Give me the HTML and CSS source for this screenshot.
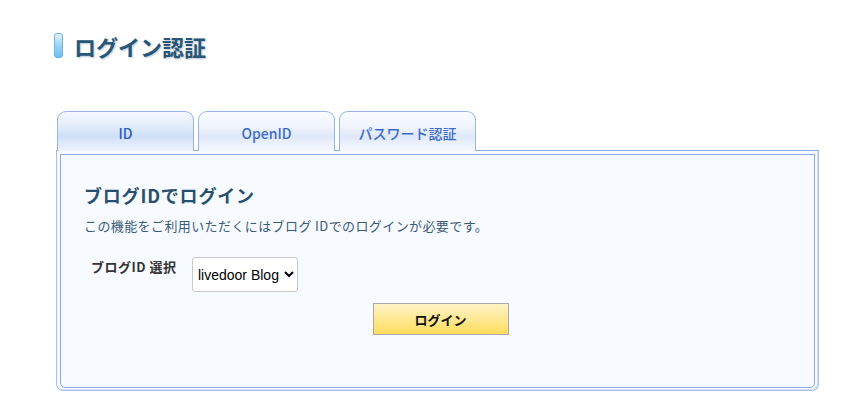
FILE: index.html
```html
<!DOCTYPE html>
<html lang="ja">
<head>
<meta charset="utf-8">
<title>ログイン認証</title>
<link rel="stylesheet" href="styles.css">
</head>
<body>
<div class="page">
  <h1 class="title"><span class="title-mark"></span>ログイン認証</h1>
  <div class="tabs">
    <div class="tab active">ID</div>
    <div class="tab">OpenID</div>
    <div class="tab">パスワード認証</div>
  </div>
  <div class="panel">
    <div class="panel-inner">
      <h2 class="panel-heading">ブログIDでログイン</h2>
      <p class="desc">この機能をご利用いただくにはブログ IDでのログインが必要です。</p>
      <div class="form-row">
        <label class="label">ブログID 選択</label>
        <select class="select"><option>livedoor Blog</option></select>
      </div>
      <div class="actions">
        <button class="btn">ログイン</button>
      </div>
    </div>
  </div>
</div>
</body>
</html>
```

FILE: styles.css
```css
html, body {
  margin: 0;
  padding: 0;
  background: #ffffff;
}
body {
  font-family: "Noto Sans CJK JP", "Noto Sans", sans-serif;
  color: #333;
}
.page {
  padding: 32px 0 0 54px;
  width: 765px;
}
.title {
  display: flex;
  align-items: center;
  margin: 0;
  height: 27px;
  font-size: 22px;
  font-weight: bold;
  color: #275676;
  text-shadow: 1px 1px 2px rgba(60, 90, 120, 0.35);
}
.title-mark {
  width: 9px;
  height: 25px;
  border: 1px solid #6eb4df;
  border-radius: 3px;
  background: linear-gradient(#e4f4fd, #9bd4f5 50%, #6cc0ef);
  margin-right: 11px;
  box-sizing: border-box;
}
.tabs {
  display: flex;
  gap: 4px;
  margin-top: 52px;
  padding-left: 3px;
  height: 39px;
  position: relative;
  z-index: 1;
}
.tab {
  width: 137px;
  height: 40px;
  box-sizing: border-box;
  border: 1px solid #98b3e6;
  border-bottom: none;
  border-radius: 9px 9px 0 0;
  background: linear-gradient(#fafcff 0%, #f1f5fd 35%, #dfe8f9 62%, #eef3fd 85%, #f5f8ff 100%);
  color: #3d6cc8;
  font-size: 14px;
  font-weight: 500;
  display: flex;
  align-items: center;
  justify-content: center;
  padding-top: 2px;
}
.tab.active {
  background: linear-gradient(#f4f8fe 0%, #e7effc 30%, #cfdff7 62%, #e2ebfb 85%, #eef3fd 100%);
  color: #2a5ec4;
}
.panel {
  margin-left: 2px;
  width: 763px;
  box-sizing: border-box;
  border: 1px solid #a9bfea;
  border-top-color: #8eaae0;
  border-radius: 0 0 7px 7px;
  padding: 3px 3px 2px 3px;
  background: #f7faff;
  box-shadow: inset -1px -1px 0 #d3e0f7;
}
.panel-inner {
  border: 1px solid #8eaae0;
  border-radius: 0 0 5px 5px;
  background: #f7faff;
  padding: 28px 23px 50px 23px;
  height: 234px;
  box-sizing: border-box;
}
.panel-heading {
  margin: 0;
  font-size: 18px;
  line-height: 24px;
  font-weight: bold;
  letter-spacing: 0.8px;
  color: #28506e;
}
.desc {
  margin: 10px 0 0 0;
  font-size: 13px;
  line-height: 18px;
  letter-spacing: 0.4px;
  color: #3b5a77;
}
.form-row {
  display: flex;
  align-items: flex-start;
  margin-top: 22px;
  padding-left: 7px;
}
.label {
  width: 101px;
  font-size: 13px;
  font-weight: bold;
  letter-spacing: 0.5px;
  color: #333;
  line-height: 18px;
  padding-top: 1px;
}
.select {
  width: 106px;
  height: 35px;
  font-family: "Liberation Sans", Arial, sans-serif;
  font-size: 14px;
  color: #000;
  background: #fff;
  border: 1px solid #c8c8c8;
  border-radius: 3px;
  padding: 0 0 0 1px;
}
.actions {
  display: flex;
  justify-content: center;
  margin-top: 11px;
  padding-left: 6px;
}
.btn {
  width: 136px;
  height: 32px;
  border: 1px solid #a9a9a9;
  background: linear-gradient(#fff3c6 0%, #ffe78e 55%, #ffdb5c 100%);
  font-family: "Noto Sans CJK JP", "Noto Sans", sans-serif;
  font-size: 13px;
  font-weight: bold;
  color: #111;
  padding: 0;
}
```
